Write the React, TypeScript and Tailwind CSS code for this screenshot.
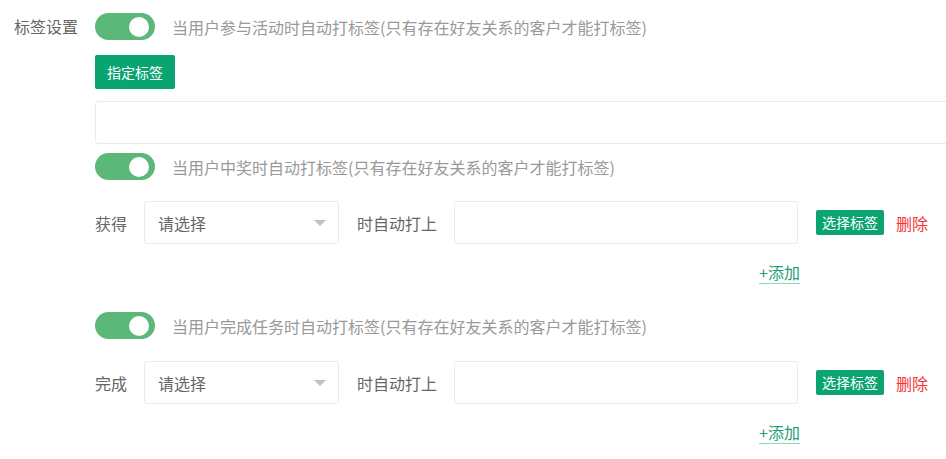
import { useState } from "react";

function Toggle({ on }: { on: boolean }) {
  return (
    <div
      className={`w-[60px] h-[27px] rounded-full flex items-center px-[4px] shrink-0 ${
        on ? "bg-[#5cb878] justify-end" : "bg-[#dcdfe6] justify-start"
      }`}
    >
      <div className="w-[20px] h-[20px] rounded-full bg-white mr-[2px]" />
    </div>
  );
}

function TagRow({ label }: { label: string }) {
  return (
    <div className="flex items-center h-[43px]">
      <span className="w-[49px] text-[#666]">{label}</span>
      <div className="w-[195px] h-[43px] border border-[#ebebeb] rounded-[3px] flex items-center justify-between pl-[13px] pr-[12px]">
        <span className="text-[#666]">请选择</span>
        <svg width="12" height="6" viewBox="0 0 12 6">
          <path d="M0 0 L12 0 L6 6 Z" fill="#c0c0c0" />
        </svg>
      </div>
      <span className="ml-[18px] w-[97px] text-[#666]">时自动打上</span>
      <div className="w-[344px] h-[43px] border border-[#ebebeb] rounded-[3px]" />
      <button className="ml-[18px] h-[25px] px-[6px] bg-[#0aa470] text-white text-[14px] rounded-[2px] leading-[25px]">
        选择标签
      </button>
      <span className="ml-[12px] text-[#f53131]">删除</span>
    </div>
  );
}

function AddLink() {
  return (
    <div className="w-[705px] flex justify-end">
      <span className="text-[#1f9e72] leading-[21px] border-b border-[#8fd6bb]">+添加</span>
    </div>
  );
}

export default function App() {
  const [toggles] = useState([true, true, true]);

  return (
    <div className="w-[946px] h-[459px] overflow-hidden bg-white flex pl-[14px] pt-[13px] text-[16px] font-['Noto_Sans_CJK_SC','Noto_Sans',sans-serif]">
      <div className="w-[81px] shrink-0 leading-[27px] text-[#666]">标签设置</div>
      <div className="flex flex-col">
        {/* 参与活动 */}
        <div className="flex items-center gap-[17px] h-[27px]">
          <Toggle on={toggles[0]} />
          <span className="text-[#999]">当用户参与活动时自动打标签(只有存在好友关系的客户才能打标签)</span>
        </div>
        <button className="mt-[15px] w-[80px] h-[34px] bg-[#0aa470] text-white text-[14px] rounded-[2px]">
          指定标签
        </button>
        <div className="mt-[12px] w-[880px] h-[43px] border border-[#ebebeb] rounded-[3px]" />

        {/* 中奖 */}
        <div className="mt-[9px] flex items-center gap-[17px] h-[27px]">
          <Toggle on={toggles[1]} />
          <span className="text-[#999]">当用户中奖时自动打标签(只有存在好友关系的客户才能打标签)</span>
        </div>
        <div className="mt-[21px]">
          <TagRow label="获得" />
        </div>
        <div className="mt-[18px]">
          <AddLink />
        </div>

        {/* 完成任务 */}
        <div className="mt-[28px] flex items-center gap-[17px] h-[27px]">
          <Toggle on={toggles[2]} />
          <span className="text-[#999]">当用户完成任务时自动打标签(只有存在好友关系的客户才能打标签)</span>
        </div>
        <div className="mt-[22px]">
          <TagRow label="完成" />
        </div>
        <div className="mt-[18px]">
          <AddLink />
        </div>
      </div>
    </div>
  );
}
